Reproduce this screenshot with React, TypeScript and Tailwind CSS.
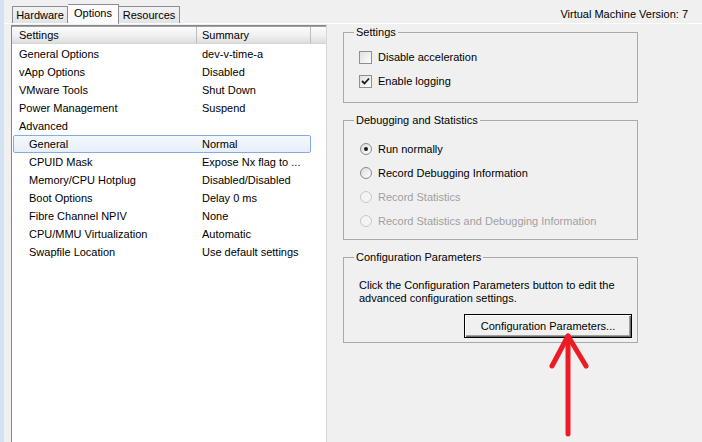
import React from "react";

const rows: { name: string; summary: string; indent?: boolean; selected?: boolean }[] = [
  { name: "General Options", summary: "dev-v-time-a" },
  { name: "vApp Options", summary: "Disabled" },
  { name: "VMware Tools", summary: "Shut Down" },
  { name: "Power Management", summary: "Suspend" },
  { name: "Advanced", summary: "" },
  { name: "General", summary: "Normal", indent: true, selected: true },
  { name: "CPUID Mask", summary: "Expose Nx flag to ...", indent: true },
  { name: "Memory/CPU Hotplug", summary: "Disabled/Disabled", indent: true },
  { name: "Boot Options", summary: "Delay 0 ms", indent: true },
  { name: "Fibre Channel NPIV", summary: "None", indent: true },
  { name: "CPU/MMU Virtualization", summary: "Automatic", indent: true },
  { name: "Swapfile Location", summary: "Use default settings", indent: true },
];

function Checkbox({ checked }: { checked?: boolean }) {
  return (
    <span className="w-[13px] h-[13px] border border-[#8e8f8f] bg-gradient-to-br from-[#e0e0e0] to-[#fdfdfd] flex items-center justify-center shrink-0">
      {checked && (
        <svg width="9" height="9" viewBox="0 0 9 9">
          <path d="M1 4 L3.5 6.5 L8 1.5" stroke="#1a1a1a" strokeWidth="1.8" fill="none" />
        </svg>
      )}
    </span>
  );
}

function Radio({ checked, disabled }: { checked?: boolean; disabled?: boolean }) {
  return (
    <span
      className={
        disabled
          ? "w-[12px] h-[12px] rounded-full border border-[#c8c8c8] bg-[#f4f4f4] shrink-0"
          : "w-[12px] h-[12px] rounded-full border border-[#8a8a8a] bg-gradient-to-br from-[#dcdcdc] to-[#ffffff] flex items-center justify-center shrink-0"
      }
    >
      {checked && <span className="w-[4px] h-[4px] rounded-full bg-[#1a1a1a]" />}
    </span>
  );
}

export default function App() {
  return (
    <div
      className="w-[702px] h-[442px] bg-[#f0f0f0] flex overflow-hidden relative text-[11px] text-black"
      style={{ fontFamily: '"Liberation Sans", Arial, sans-serif' }}
    >
      <div className="w-[4px] h-full bg-[#d3e2f4] shrink-0" />
      <div className="flex-1 flex flex-col">
        {/* Tab row */}
        <div className="h-[23px] flex items-end pl-[8px] shrink-0">
          <div className="h-[17px] w-[56px] flex items-center justify-center border border-b-0 border-[#898c95] bg-gradient-to-b from-[#f3f3f3] to-[#e3e3e3] leading-none">
            Hardware
          </div>
          <div className="h-[20px] w-[51px] flex items-start justify-center pt-[3px] border border-b-0 border-l-0 border-[#898c95] bg-[#fbfbfb] leading-none -mb-[1px] relative">
            Options
          </div>
          <div className="h-[17px] w-[61px] flex items-center justify-center border border-b-0 border-l-0 border-[#898c95] bg-gradient-to-b from-[#f3f3f3] to-[#e3e3e3] leading-none">
            Resources
          </div>
          <div className="ml-auto self-center pr-[14px] pt-[5px]">Virtual Machine Version: 7</div>
        </div>
        <div className="flex flex-1 border-t border-white">
          {/* left pane */}
          <div className="pl-[7px] pt-[1px] flex">
            <div className="w-[315px] border-l border-t border-[#828790] bg-white flex flex-col">
              <div className="h-[18px] flex border-b border-[#d5d5d5] bg-gradient-to-b from-[#fbfbfb] via-[#f1f1f1] to-[#dedede] border-t border-t-[#a0a0a0]">
                <div className="w-[185px] pl-[7px] flex items-center border-r border-[#bdbdbd]">Settings</div>
                <div className="w-[114px] pl-[5px] flex items-center border-r border-[#bdbdbd]">Summary</div>
                <div className="flex-1" />
              </div>
              <div className="pt-[1px] pl-[1px] flex flex-col">
                {rows.map((r) => (
                  <div
                    key={r.name}
                    className={
                      r.selected
                        ? "h-[18px] w-[298px] flex items-center border border-[#84acdd] bg-gradient-to-b from-[#f5f9fd] to-[#e6eef9] rounded-[2px]"
                        : "h-[18px] w-[298px] flex items-center border border-transparent"
                    }
                  >
                    <div className={r.indent ? "w-[184px] pl-[15px]" : "w-[184px] pl-[5px]"}>{r.name}</div>
                    <div className="pl-[4px] whitespace-nowrap">{r.summary}</div>
                  </div>
                ))}
              </div>
            </div>
          </div>
          {/* right pane */}
          <div className="flex-1 border-l border-[#d9d9d9] pl-[16px] flex flex-col">
            <fieldset className="w-[295px] border border-[#a9a9a9] pl-[15px] pt-[6px] pb-[9px] mt-[1px]">
              <legend className="ml-[-5px] px-[2px] leading-[14px]">Settings</legend>
              <div className="h-[24px] flex items-center gap-[6px]">
                <Checkbox />
                <span>Disable acceleration</span>
              </div>
              <div className="h-[24px] flex items-center gap-[6px]">
                <Checkbox checked />
                <span>Enable logging</span>
              </div>
            </fieldset>
            <fieldset className="w-[295px] border border-[#a9a9a9] pl-[16px] pt-[10px] pb-[6px] mt-[10px]">
              <legend className="ml-[-6px] px-[2px] leading-[14px]">Debugging and Statistics</legend>
              <div className="h-[24px] flex items-center gap-[6px]">
                <Radio checked />
                <span>Run normally</span>
              </div>
              <div className="h-[24px] flex items-center gap-[6px]">
                <Radio />
                <span>Record Debugging Information</span>
              </div>
              <div className="h-[24px] flex items-center gap-[6px] text-[#a0a0a0]">
                <Radio disabled />
                <span>Record Statistics</span>
              </div>
              <div className="h-[24px] flex items-center gap-[6px] text-[#a0a0a0]">
                <Radio disabled />
                <span>Record Statistics and Debugging Information</span>
              </div>
            </fieldset>
            <fieldset className="w-[295px] border border-[#a9a9a9] pl-[15px] pr-[5px] pt-[15px] pb-[4px] mt-[10px] flex flex-col">
              <legend className="ml-[-5px] px-[2px] leading-[14px]">Configuration Parameters</legend>
              <p className="leading-[13px]">
                Click the Configuration Parameters button to edit the
                <br />
                advanced configuration settings.
              </p>
              <button className="mt-[9px] self-end w-[168px] h-[24px] border border-black bg-[#f0f0f0] shadow-[inset_1px_1px_0_#ffffff,inset_-1px_-1px_0_#696969,inset_-2px_-2px_0_#a0a0a0] flex items-center justify-center">
                Configuration Parameters...
              </button>
            </fieldset>
          </div>
        </div>
      </div>
      <svg className="absolute left-0 top-0 pointer-events-none" width="702" height="442" viewBox="0 0 702 442">
        <g stroke="#ed1c24" strokeWidth="5" strokeLinecap="round" strokeLinejoin="round" fill="none">
          <path d="M568 336 L568 434" />
          <path d="M552 366 L568 336 L586 366" />
        </g>
      </svg>
    </div>
  );
}
